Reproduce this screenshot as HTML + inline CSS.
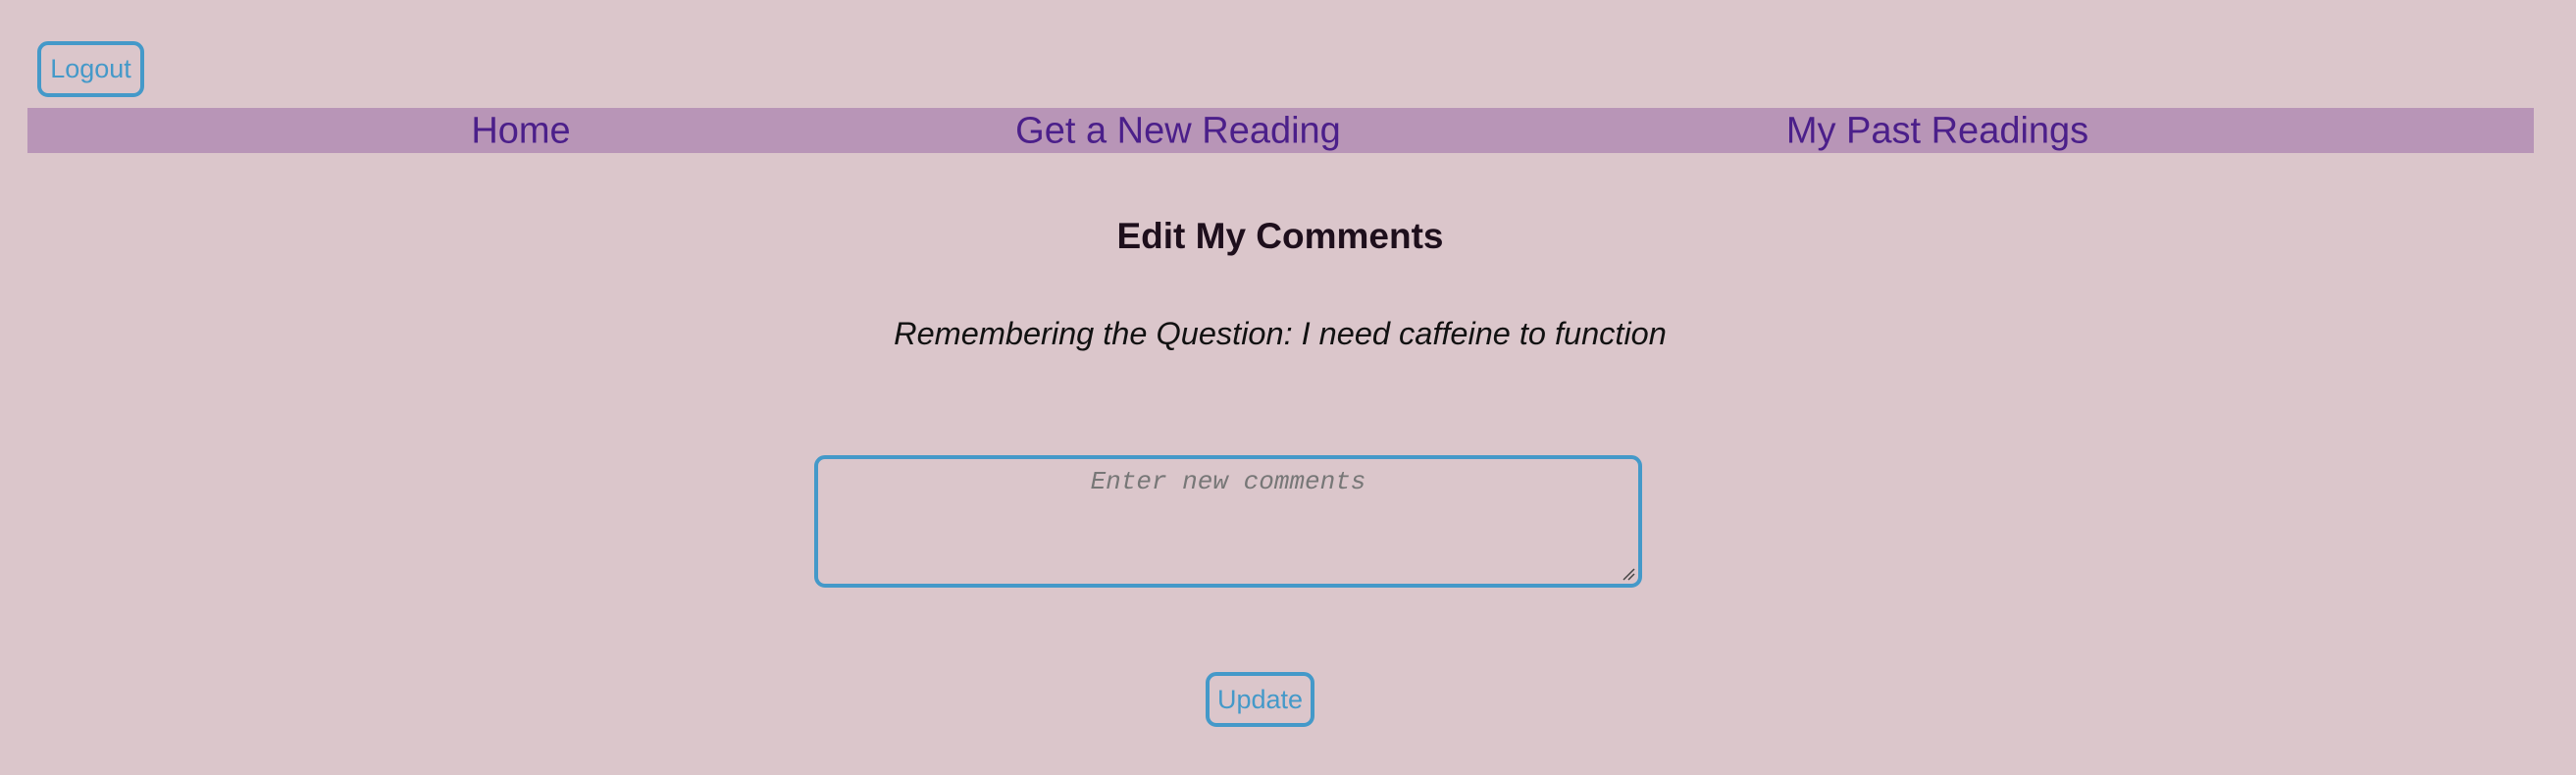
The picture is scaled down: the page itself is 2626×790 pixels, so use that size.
<!DOCTYPE html>
<html><head><style>
body{margin:0;width:2626px;height:790px;background:#dbc6cb;font-family:"Liberation Sans",sans-serif;position:relative;overflow:hidden}
.btn{position:absolute;box-sizing:border-box;border:4px solid #4499c9;border-radius:11px;color:#4499c9;font-size:27px;display:flex;align-items:center;justify-content:center}
.nav{position:absolute;left:28px;top:110px;width:2555px;height:46px;background:#b895b7}
.nav span{position:absolute;top:50%;transform:translate(-50%,-50%);color:#4b1f8a;font-size:38px;white-space:nowrap;margin-top:1px}
.c{position:absolute;left:0;width:2626px;text-align:center;white-space:nowrap}
</style></head><body>
<div class="btn" style="left:38px;top:42px;width:109px;height:57px">Logout</div>
<div class="nav">
<span style="left:503px">Home</span>
<span style="left:1173px">Get a New Reading</span>
<span style="left:1947px">My Past Readings</span>
</div>
<div class="c" style="top:220px;left:0;font-size:37px;font-weight:bold;color:#1e0f1c;width:2610px">Edit My Comments</div>
<div class="c" style="top:322px;font-size:32.5px;font-style:italic;color:#111;width:2610px">Remembering the Question: I need caffeine to function</div>
<div style="position:absolute;left:830px;top:464px;width:844px;height:135px;box-sizing:border-box;border:4px solid #4499c9;border-radius:11px">
<div style="text-align:center;font-family:'Liberation Mono',monospace;font-style:italic;font-size:26px;color:#777;margin-top:8px">Enter new comments</div>
<svg style="position:absolute;right:3px;bottom:3px" width="14" height="14"><path d="M2 13 L13 2 M7 13 L13 7" stroke="#444" stroke-width="1.5"/></svg>
</div>
<div class="btn" style="left:1229px;top:685px;width:111px;height:56px">Update</div>
</body></html>
